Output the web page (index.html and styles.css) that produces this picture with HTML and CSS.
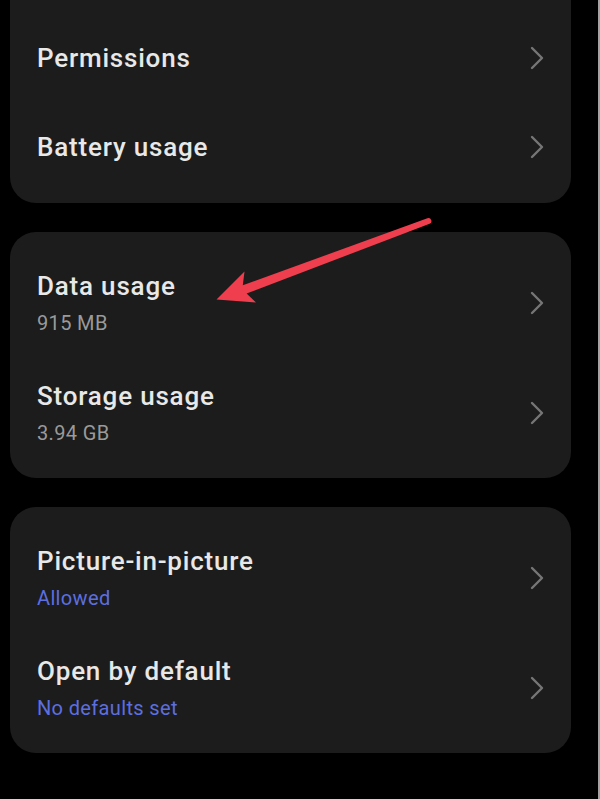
FILE: index.html
```html
<!DOCTYPE html>
<html lang="en">
<head>
<meta charset="utf-8">
<title>App info</title>
<link rel="stylesheet" href="styles.css">
</head>
<body>
<main class="page">
  <section class="card card-first">
    <div class="row row-single">
      <div class="row-text"><div class="title">Permissions</div></div>
      <svg class="chev" viewBox="0 0 14 24" width="14" height="24"><path d="M2 2 L12 12 L2 22"/></svg>
    </div>
    <div class="row row-single">
      <div class="row-text"><div class="title">Battery usage</div></div>
      <svg class="chev" viewBox="0 0 14 24" width="14" height="24"><path d="M2 2 L12 12 L2 22"/></svg>
    </div>
  </section>

  <section class="card">
    <div class="row">
      <div class="row-text"><div class="title">Data usage</div><div class="sub">915 MB</div></div>
      <svg class="chev" viewBox="0 0 14 24" width="14" height="24"><path d="M2 2 L12 12 L2 22"/></svg>
    </div>
    <div class="row">
      <div class="row-text"><div class="title">Storage usage</div><div class="sub">3.94 GB</div></div>
      <svg class="chev" viewBox="0 0 14 24" width="14" height="24"><path d="M2 2 L12 12 L2 22"/></svg>
    </div>
  </section>

  <section class="card">
    <div class="row">
      <div class="row-text"><div class="title">Picture-in-picture</div><div class="sub sub-blue">Allowed</div></div>
      <svg class="chev" viewBox="0 0 14 24" width="14" height="24"><path d="M2 2 L12 12 L2 22"/></svg>
    </div>
    <div class="row">
      <div class="row-text"><div class="title">Open by default</div><div class="sub sub-blue">No defaults set</div></div>
      <svg class="chev" viewBox="0 0 14 24" width="14" height="24"><path d="M2 2 L12 12 L2 22"/></svg>
    </div>
  </section>
</main>

<svg class="arrow" viewBox="0 0 598 799" width="598" height="799">
  <path d="M216.5 299.5 L244.5 271.5 L242.8 285.3 L427.4 218.3 A2.9 2.9 0 0 1 429.6 223.7 L246.6 293.6 L256 302.5 Z"/>
</svg>
</body>
</html>
```

FILE: styles.css
```css
html {
  background: #000;
}
body {
  margin: 0;
  width: 598px;
  height: 799px;
  overflow: hidden;
  border-right: 2px solid #a3a3a3;
  background: #000;
  position: relative;
  font-family: Roboto, "Noto Sans", "Liberation Sans", sans-serif;
}
.page {
  display: flex;
  flex-direction: column;
  gap: 29px;
  padding: 0 27px 0 10px;
}
.card {
  background: #1c1c1c;
  border-radius: 26px;
  padding: 16px 27px 10px 27px;
}
.card-first {
  margin-top: -30px;
  padding-top: 43px;
  padding-bottom: 12px;
}
.row {
  display: flex;
  align-items: center;
  justify-content: space-between;
  padding: 22px 0;
}
.row-single {
  padding: 28.5px 0;
}
.title {
  font-size: 26px;
  line-height: 32px;
  font-weight: 500;
  letter-spacing: 0.8px;
  color: #e8e8e8;
}
.sub {
  margin-top: 8px;
  font-size: 20px;
  line-height: 26px;
  letter-spacing: 0.35px;
  color: #9a9a9a;
}
.sub-blue {
  color: #5c6fe0;
}
.chev {
  flex: none;
  fill: none;
  stroke: #767676;
  stroke-width: 2.4;
  stroke-linecap: round;
  stroke-linejoin: round;
}
.arrow {
  position: absolute;
  left: 0;
  top: 0;
  pointer-events: none;
}
.arrow path {
  fill: #ef3e4d;
}
```
